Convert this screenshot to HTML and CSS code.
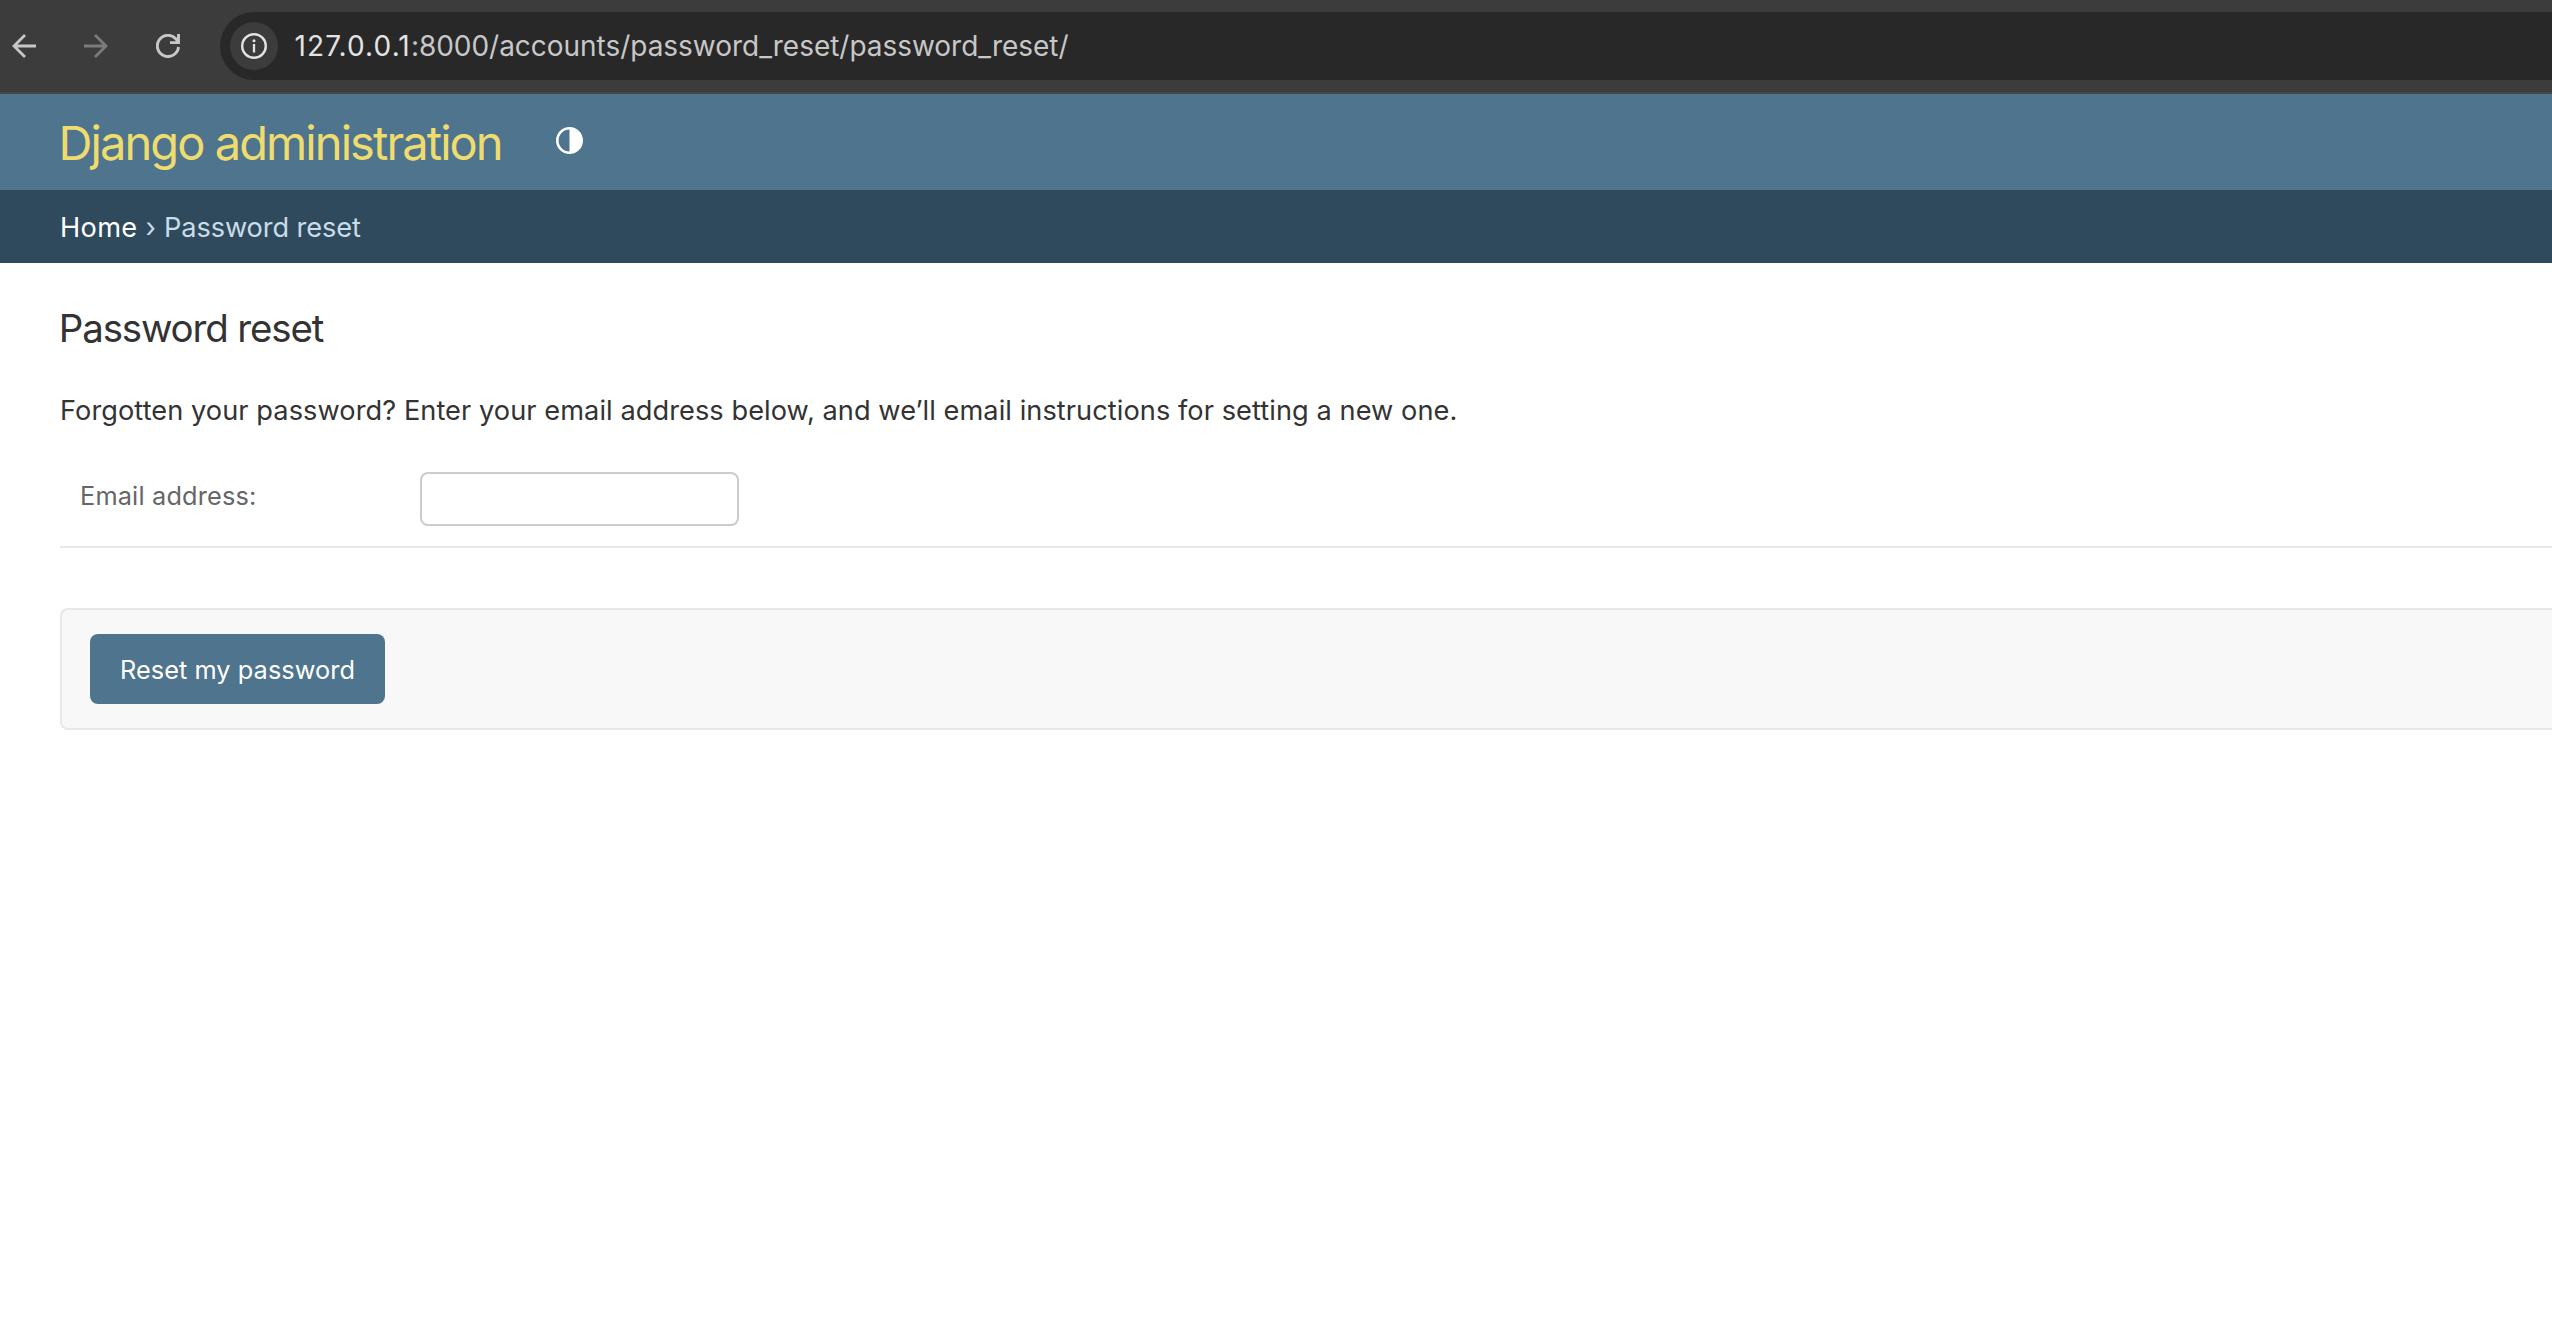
FILE: index.html
```html
<!DOCTYPE html>
<html lang="en">
<head>
<meta charset="utf-8">
<title>Password reset | Django site admin</title>
<link rel="stylesheet" href="styles.css">
</head>
<body>
<div class="toolbar">
  <svg class="nav-icon" viewBox="0 0 24 24"><path d="M24 12H2M13 1L2 12l11 11" fill="none" stroke="#c7c7c7" stroke-width="2.8"/></svg>
  <svg class="nav-icon" viewBox="0 0 24 24"><path d="M0 12h22M11 1l11 11-11 11" fill="none" stroke="#7b7b7b" stroke-width="2.8"/></svg>
  <svg class="nav-icon" viewBox="0 0 24 24"><path d="M22.5 13A10.6 10.6 0 1 1 19.8 4.8L22.5 8M14 8.6h8.5V0" fill="none" stroke="#c7c7c7" stroke-width="2.9"/></svg>
  <div class="address-bar">
    <span class="site-info">
      <svg viewBox="0 0 26 26"><circle cx="13" cy="13" r="11.8" fill="none" stroke="#e3e3e3" stroke-width="2.4"/><circle cx="13" cy="7.8" r="1.5" fill="#e3e3e3"/><path d="M13 11v8.5" stroke="#e3e3e3" stroke-width="2.3"/></svg>
    </span>
    <span class="url"><span class="url-host">127.0.0.1</span>:8000/accounts/password_reset/password_reset/</span>
  </div>
</div>
<header class="header">
  <h1 class="site-name">Django administration</h1>
  <svg class="theme-icon" viewBox="0 0 27 27"><circle cx="13.5" cy="13.5" r="12.2" fill="none" stroke="#fff" stroke-width="2.6"/><path d="M13.5 1a12.5 12.5 0 0 1 0 25z" fill="#fff"/></svg>
</header>
<nav class="breadcrumbs"><a class="home">Home</a><span class="separator">›</span><span class="current">Password reset</span></nav>
<main class="content">
  <h2 class="title">Password reset</h2>
  <p class="intro">Forgotten your password? Enter your email address below, and we’ll email instructions for setting a new one.</p>
  <form>
    <div class="form-row">
      <label class="label" for="email">Email address:</label>
      <input class="field" id="email" type="email">
    </div>
    <div class="submit-row">
      <button class="submit" type="button">Reset my password</button>
    </div>
  </form>
</main>
</body>
</html>
```

FILE: styles.css
```css
* { box-sizing: border-box; }

body {
  margin: 0;
  background: #fff;
  color: #333;
  font-family: Inter, "Liberation Sans", sans-serif;
  font-size: 27.2px;
  overflow: hidden;
}

.toolbar {
  display: flex;
  align-items: center;
  height: 94px;
  padding-left: 12px;
  background: #3c3c3c;
  border-bottom: 2px solid #474747;
}

.nav-icon {
  width: 24px;
  height: 24px;
  margin-right: 48px;
}

.address-bar {
  display: flex;
  flex: 1;
  align-items: center;
  height: 68px;
  margin-left: -8px;
  padding-left: 10px;
  background: #282828;
  border-radius: 34px 0 0 34px;
}

.site-info {
  display: flex;
  align-items: center;
  justify-content: center;
  width: 48px;
  height: 48px;
  margin-right: 16.5px;
  background: #3c3c3c;
  border-radius: 50%;
}

.site-info svg { width: 26px; height: 26px; }

.url {
  color: #c7c7c7;
  font-size: 28px;
  letter-spacing: -0.03px;
  white-space: nowrap;
}

.url-host {
  color: #e3e3e3;
  letter-spacing: 1.1px;
}

.header {
  display: flex;
  align-items: center;
  height: 96px;
  padding-left: 58.5px;
  background: #4f748e;
}

.site-name {
  width: 497.2px;
  margin: 2px 0 0;
  color: #efdc6e;
  font-size: 47px;
  font-weight: 400;
  line-height: 60px;
  letter-spacing: -1.92px;
  white-space: nowrap;
}

.theme-icon {
  width: 27px;
  height: 27px;
  margin-top: -3px;
}

.breadcrumbs {
  display: flex;
  align-items: center;
  height: 73px;
  padding: 2px 0 0 60px;
  background: #2f4a5c;
  color: #c9dce9;
  white-space: nowrap;
}

.home {
  width: 85.5px;
  color: #fff;
  letter-spacing: 0.35px;
}

.separator { width: 18.5px; }

.current { letter-spacing: -0.1px; }

.content { padding: 40px 0 0 60px; }

.title {
  margin: 0;
  font-size: 38.5px;
  font-weight: 400;
  line-height: 50px;
  letter-spacing: -1.17px;
  text-indent: -1.2px;
}

.intro {
  margin: 38px 0 41px;
  line-height: 40px;
  letter-spacing: 0.06px;
  white-space: nowrap;
}

.form-row {
  display: flex;
  height: 76px;
  padding-left: 20px;
  border-bottom: 2px solid #e8e8e8;
}

.label {
  width: 340px;
  color: #666;
  font-size: 25.3px;
  line-height: 48px;
  letter-spacing: 0.18px;
}

.field {
  width: 319px;
  height: 54px;
  padding: 10px 12px;
  background: #fff;
  border: 2px solid #ccc;
  border-radius: 8px;
  font: inherit;
}

.submit-row {
  height: 122px;
  margin-top: 60px;
  padding: 24px 28px;
  background: #f8f8f8;
  border: 2px solid #e8e8e8;
  border-right: 0;
  border-radius: 8px 0 0 8px;
}

.submit {
  display: block;
  width: 295px;
  height: 70px;
  padding: 0;
  background: #4f748e;
  border: 0;
  border-radius: 8px;
  color: #fff;
  font: 25.3px Inter, "Liberation Sans", sans-serif;
  letter-spacing: 0.06px;
}
```
